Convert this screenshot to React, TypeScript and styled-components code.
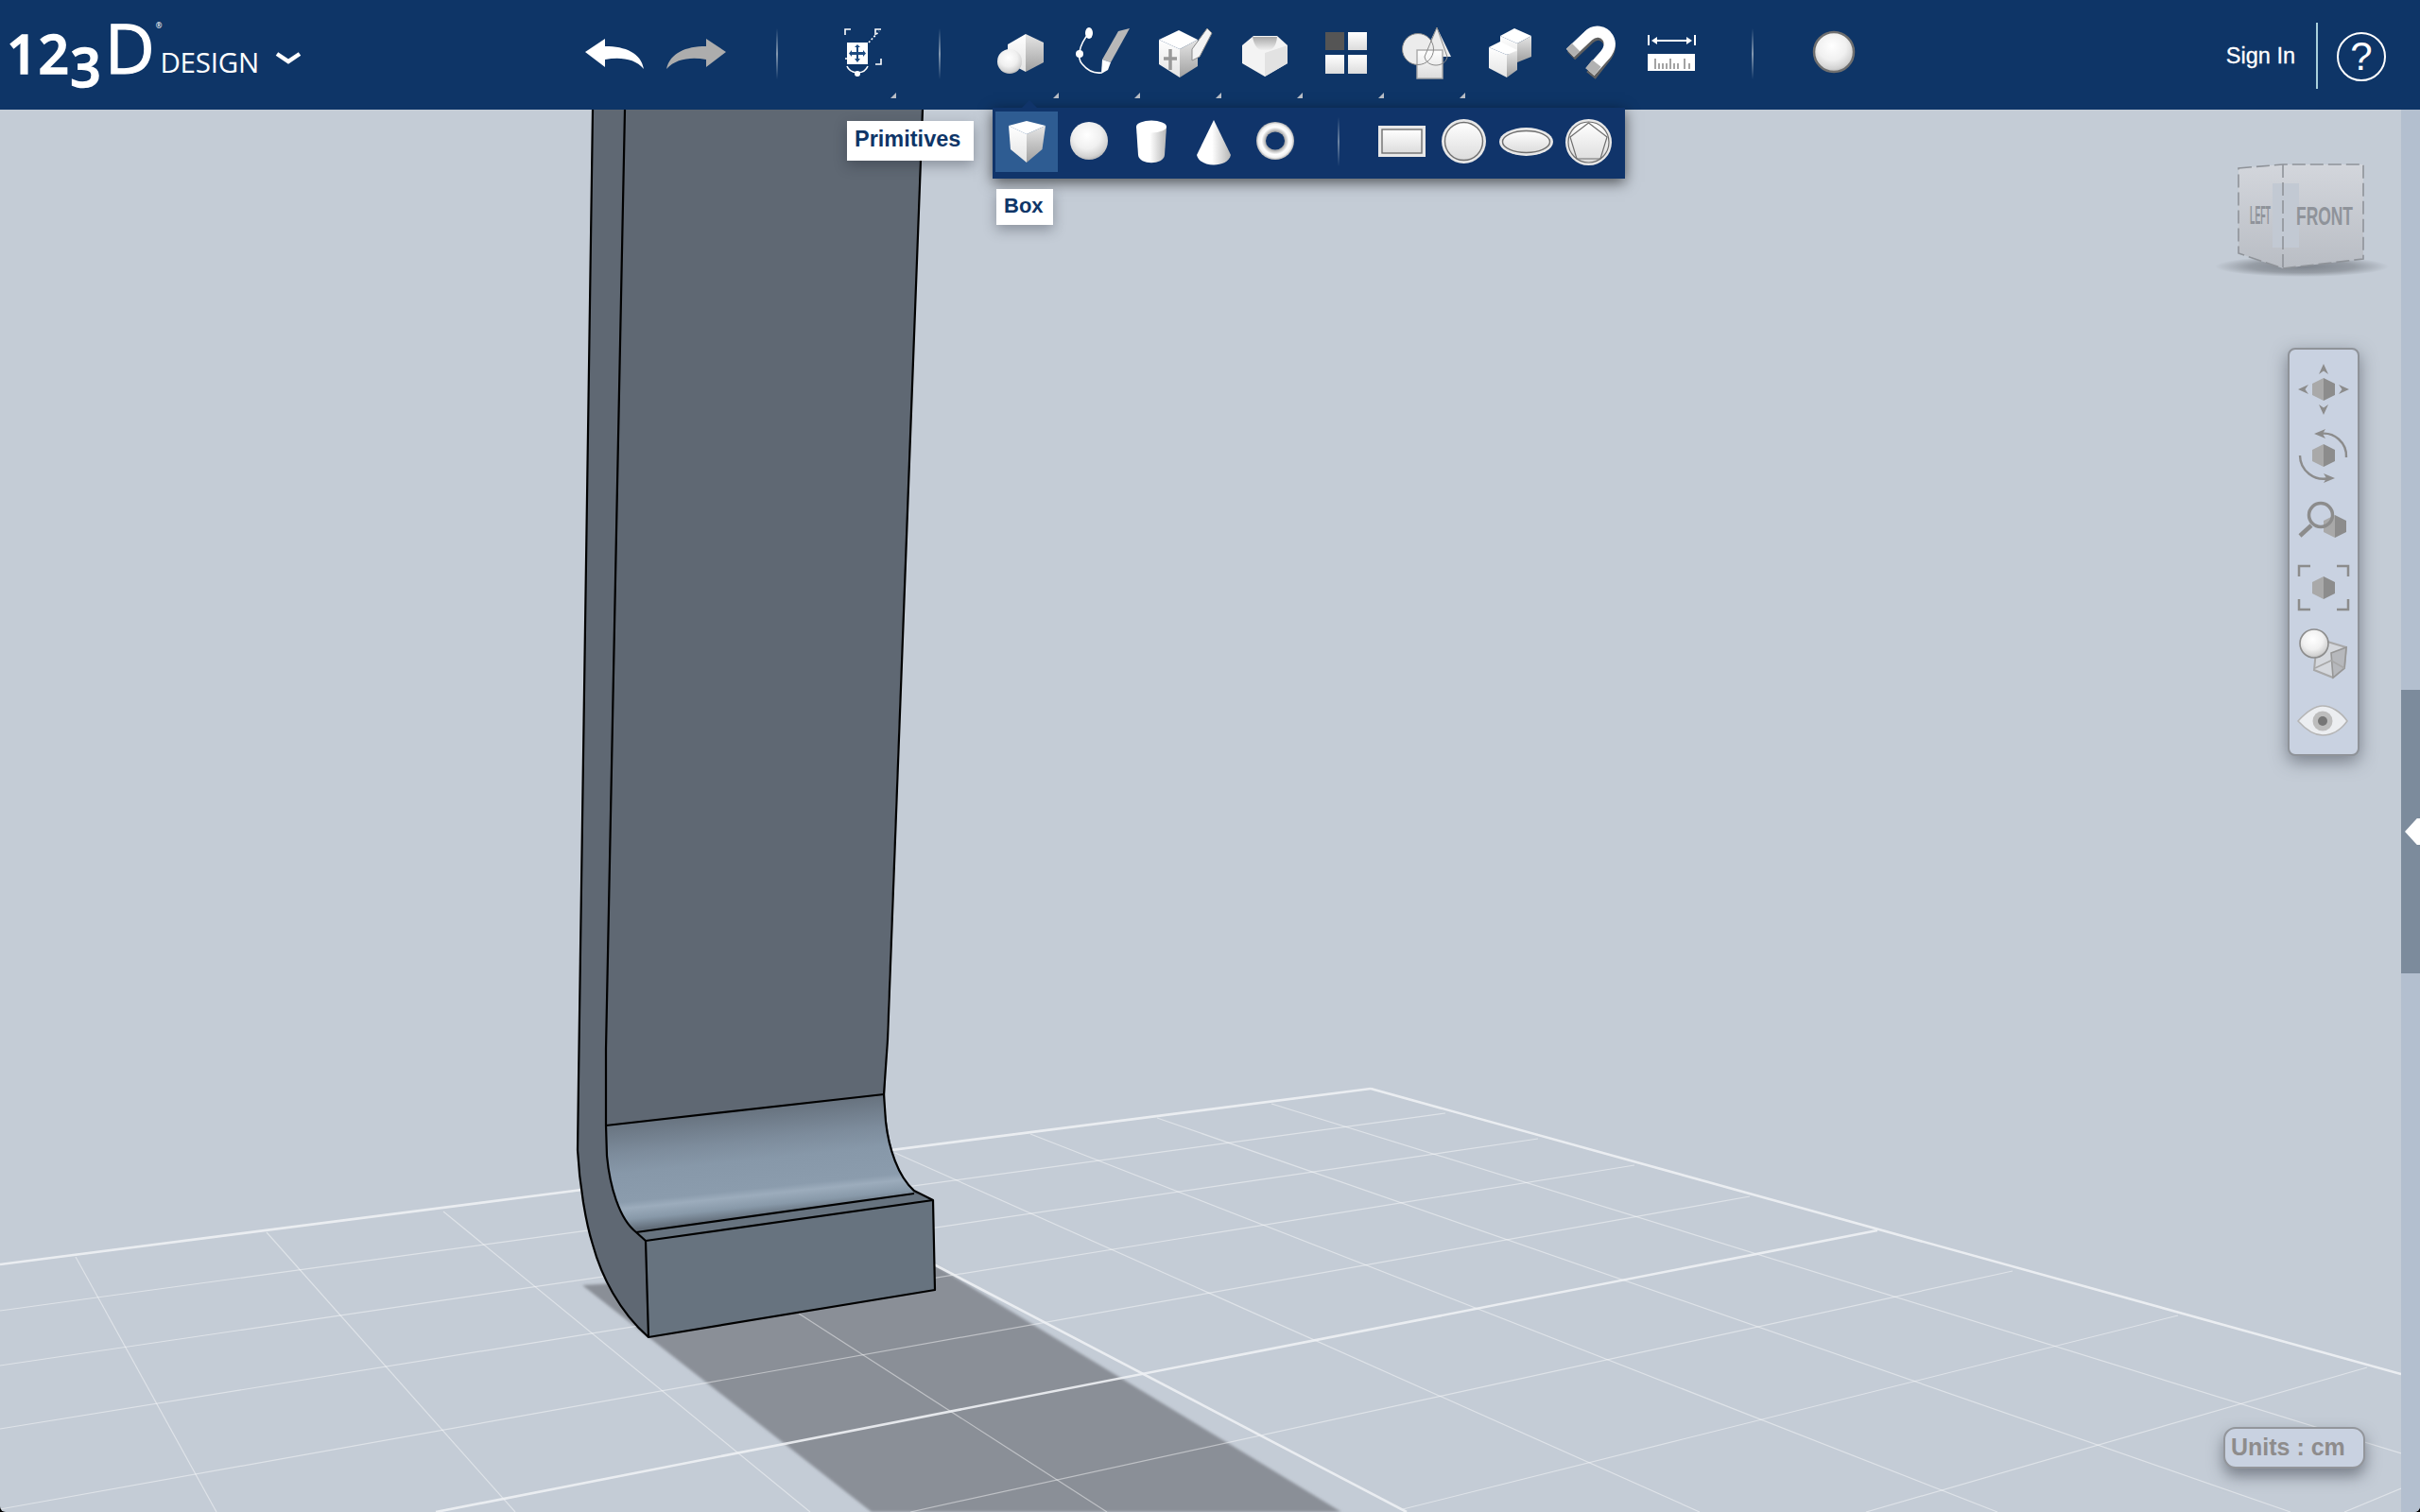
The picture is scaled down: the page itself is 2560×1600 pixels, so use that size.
import React from 'react';
import styled, {createGlobalStyle} from 'styled-components';

const NAVY = '#0e3567';

const GlobalStyle = createGlobalStyle`
  html, body {
    margin: 0;
    padding: 0;
    background: #000;
  }
  body {
    font-family: "Liberation Sans", Arial, sans-serif;
  }
`;

const Page = styled.div`
  position: relative;
  display: flex;
  flex-direction: column;
  width: 2560px;
  height: 1600px;
  overflow: hidden;
  border-radius: 0 0 6px 6px;
  background: #c4ccd6;
`;

const Header = styled.header`
  flex: none;
  display: flex;
  align-items: stretch;
  height: 116px;
  padding-right: 36px;
  box-sizing: border-box;
  background: ${NAVY};
  color: #fff;
`;

const Brand = styled.div`
  flex: none;
  width: 606px;
  display: flex;
  align-items: flex-start;
  padding: 13px 0 0 7px;
  box-sizing: border-box;
`;

const LogoMark = styled.div`
  font-family: "Open Sans", sans-serif;
  font-weight: 600;
  font-size: 57px;
  line-height: 74px;
  letter-spacing: 1px;
  white-space: nowrap;
  display: flex;
  align-items: baseline;
  -webkit-text-stroke: 1.4px #fff;
`;

const LogoThree = styled.span`
  display: inline-block;
  transform: translateY(14px);
`;

const LogoD = styled.span`
  font-size: 73px;
  font-weight: 400;
  -webkit-text-stroke: 1.2px #fff;
  margin-left: 3px;
`;

const LogoReg = styled.sup`
  font-size: 8px;
  letter-spacing: 0;
  line-height: 0;
  -webkit-text-stroke: 0;
  align-self: flex-start;
  margin: 14px 0 0 0;
`;

const LogoWord = styled.span`
  font-family: "Open Sans", sans-serif;
  font-size: 29.5px;
  line-height: 38px;
  margin: 34px 0 0 -2px;
  letter-spacing: -0.2px;
`;

const Chevron = styled.svg`
  width: 28px;
  height: 14px;
  margin: 41px 0 0 17px;
`;

const Cell = styled.div<{$w?: number}>`
  position: relative;
  flex: none;
  width: ${p => p.$w ?? 86}px;
  height: 116px;
  svg {
    display: block;
    width: ${p => p.$w ?? 86}px;
    height: 116px;
  }
`;

const Caret = styled.i`
  position: absolute;
  right: -1px;
  bottom: 12px;
  width: 0;
  height: 0;
  border-left: 6px solid transparent;
  border-bottom: 6px solid #b9bec6;
`;

const Rule = styled.div<{$before: number; $after: number}>`
  flex: none;
  align-self: flex-start;
  width: 2px;
  height: 54px;
  margin: 30px ${p => p.$after}px 0 ${p => p.$before}px;
  background: linear-gradient(to bottom, rgba(170, 185, 200, 0), rgba(170, 185, 200, 0.75) 50%, rgba(170, 185, 200, 0));
`;

const SignIn = styled.a`
  margin-left: auto;
  margin-top: 3px;
  align-self: center;
  font-size: 23.5px;
  color: #fff;
  -webkit-text-stroke: 0.3px #fff;
`;

const HelpDivider = styled.div`
  width: 2px;
  height: 70px;
  align-self: center;
  margin: 2px 20px 0 22px;
  background: #a9d0dc;
`;

const HelpButton = styled.div`
  align-self: center;
  width: 52px;
  height: 52px;
  box-sizing: border-box;
  border: 2px solid #fff;
  border-radius: 50%;
  margin-top: 4px;
  display: flex;
  align-items: center;
  justify-content: center;
  font-size: 42px;
  line-height: 1;
`;

const Main = styled.main`
  flex: 1;
  display: flex;
  min-height: 0;
`;

const Viewport = styled.div`
  position: relative;
  flex: 1;
`;

const Scene = styled.svg`
  position: absolute;
  inset: 0;
  width: 100%;
  height: 100%;
`;

const SidePanel = styled.div`
  flex: none;
  width: 20px;
  position: relative;
  background: #b3bfcf;
`;

const SideHandle = styled.div`
  position: absolute;
  left: 0;
  right: 0;
  top: 614px;
  height: 300px;
  background: #7c8b9c;
  &::after {
    content: '';
    position: absolute;
    left: 4px;
    top: 136px;
    width: 16px;
    height: 28px;
    background: #fff;
    clip-path: polygon(0 50%, 80% 0, 100% 0, 100% 100%, 80% 100%);
  }
`;

const ViewCube = styled.svg`
  position: absolute;
  right: 0;
  top: 50px;
  width: 200px;
  height: 140px;
`;

const NavPanel = styled.div`
  position: absolute;
  right: 44px;
  top: 252px;
  width: 76px;
  height: 432px;
  box-sizing: border-box;
  padding-top: 7px;
  display: flex;
  flex-direction: column;
  align-items: center;
  background: #c9d2e1;
  border: 2px solid #8f9399;
  border-radius: 8px;
  box-shadow: 0 6px 18px rgba(60, 66, 76, 0.55);
`;

const NavIcon = styled.svg`
  display: block;
  flex: none;
  width: 72px;
  height: 70px;
`;

const UnitsBadge = styled.div`
  position: absolute;
  right: 38px;
  bottom: 46px;
  width: 150px;
  height: 44px;
  box-sizing: border-box;
  border: 2px solid #93969b;
  border-radius: 13px;
  background: #c9d2e1;
  box-shadow: 0 8px 16px rgba(60, 66, 76, 0.55);
  padding-left: 6px;
  font-size: 25px;
  font-weight: 700;
  line-height: 38px;
  color: #8e8c8c;
  white-space: nowrap;
`;

const Flyout = styled.div`
  position: absolute;
  left: 1050px;
  top: 114px;
  width: 669px;
  height: 75px;
  box-sizing: border-box;
  padding: 4px 0 0 3px;
  display: flex;
  background: #10346a;
  box-shadow: 0 4px 14px rgba(0, 0, 0, 0.6);
  &::before {
    content: '';
    position: absolute;
    left: 31px;
    top: -8px;
    border-left: 8px solid transparent;
    border-right: 8px solid transparent;
    border-bottom: 8px solid #10346a;
  }
`;

const FlyoutItem = styled.div<{$active?: boolean}>`
  flex: none;
  width: 66px;
  height: 64px;
  background: ${p => (p.$active ? '#2e5c92' : 'transparent')};
  svg {
    display: block;
    width: 66px;
    height: 64px;
  }
`;

const FlyoutRule = styled.div`
  flex: none;
  width: 2px;
  height: 52px;
  margin: 6px 33px 0 32px;
  background: linear-gradient(to bottom, rgba(170, 185, 200, 0), rgba(170, 185, 200, 0.6) 50%, rgba(170, 185, 200, 0));
`;

const Tip = styled.div<{$left: number; $top: number; $w: number; $h: number; $size: number}>`
  position: absolute;
  left: ${p => p.$left}px;
  top: ${p => p.$top}px;
  width: ${p => p.$w}px;
  height: ${p => p.$h}px;
  box-sizing: border-box;
  padding: 0 0 3px 8px;
  display: flex;
  align-items: center;
  background: #fff;
  color: ${NAVY};
  font-size: ${p => p.$size}px;
  font-weight: 700;
  box-shadow: 0 5px 14px rgba(30, 35, 45, 0.35);
`;

const Defs = styled.svg`
  position: absolute;
  width: 0;
  height: 0;
`;

// floor lines, in page coordinates
const thinLines = [
  [0, 1387, 1529, 1178],
  [0, 1445, 1627, 1205],
  [0, 1512, 1729, 1233],
  [0, 1597, 1851, 1266],
  [963, 1600, 2129, 1345],
  [1484, 1597, 2304, 1392],
  [1974, 1600, 2504, 1447],
  [2480, 1600, 2540, 1575],
  [80, 1330, 229, 1600],
  [282, 1304, 545, 1600],
  [469, 1282, 857, 1600],
  [845, 1390, 1171, 1600],
  [947, 1220, 1798, 1600],
  [1090, 1200, 2113, 1600],
  [1224, 1183, 2423, 1600],
  [1345, 1168, 2540, 1538],
];

const thickLines = [
  [0, 1338, 1450, 1152],
  [1450, 1152, 2540, 1454],
  [461, 1600, 1986, 1302],
  [988, 1338, 1488, 1600],
];

const Floor = () => (
  <g>
    <polygon points="616,1360 988,1338 1419,1600 922,1600" fill="#8a8f97" filter="url(#soft)" />
    {thinLines.map(([x1, y1, x2, y2], i) => (
      <line key={i} x1={x1} y1={y1} x2={x2} y2={y2} stroke="#fff" strokeOpacity="0.45" strokeWidth="1.2" />
    ))}
    {thickLines.map(([x1, y1, x2, y2], i) => (
      <line key={i} x1={x1} y1={y1} x2={x2} y2={y2} stroke="#eef1f4" strokeOpacity="0.9" strokeWidth="2.6" />
    ))}
  </g>
);

const Bracket = () => (
  <g fill="none" stroke="#000" strokeWidth="2.2" strokeLinejoin="round">
    <path
      d="M627 116 L612 1143 L611 1217 C613 1255 620 1295 630 1325 C640 1358 655 1388 685 1415 L989 1365 L987 1270 C975 1266 968 1262 962 1255 C948 1240 940 1210 936 1170 L937 1127 L976 116 Z"
      fill="#5f6873"
      stroke="none"
    />
    <path d="M641 1191 L935 1159 C937 1200 945 1232 967 1263 L673 1304 C655 1290 645 1250 642 1223 Z" fill="url(#fillet)" stroke="none" />
    <path d="M683 1313 L987 1270 L989 1365 L686 1415 Z" fill="#67737f" stroke="none" />
    <path d="M673 1304 L967 1263 L987 1270 L683 1313 Z" fill="#67737f" stroke="none" />
    <path d="M627 116 L612 1143 L611 1217 C613 1255 620 1295 627 1317 C636 1350 655 1388 686 1415" />
    <path d="M661 116 L641 1110 L641 1191 L642 1223 C645 1255 655 1290 673 1304 L683 1313" />
    <path d="M976 116 L939 1100 L935 1158 L937 1187 C940 1215 950 1245 967 1260 L987 1270" />
    <path d="M641 1191 L935 1158" />
    <path d="M673 1304 L967 1263" />
    <path d="M683 1313 L987 1270 L989 1365 L686 1415 Z" />
  </g>
);

const Hex = ({x = 36, y = 35}: {x?: number; y?: number}) => (
  <g>
    <polygon points={`${x},${y - 12} ${x},${y + 12} ${x - 12},${y + 6} ${x - 12},${y - 6}`} fill="#a9a9a9" />
    <polygon points={`${x},${y - 12} ${x + 12},${y - 6} ${x + 12},${y + 6} ${x},${y + 12}`} fill="#8c8c8c" />
  </g>
);

const NavPan = () => (
  <NavIcon viewBox="0 0 72 70">
    <Hex />
    {[0, 90, 180, 270].map(a => (
      <path key={a} d="M36 8 L41 19 L36 15.5 L31 19 Z" fill="#8c8c8c" transform={`rotate(${a} 36 35)`} />
    ))}
  </NavIcon>
);

const NavOrbit = () => (
  <NavIcon viewBox="0 0 72 70">
    <Hex />
    <g fill="none" stroke="#8c8c8c" strokeWidth="2.4">
      <path d="M32 12 A 24 24 0 0 1 60 37" />
      <path d="M11 35 A 25 25 0 0 0 42 59" />
    </g>
    <path d="M26 12 L38 7 L35 12 L38 17 Z" fill="#8c8c8c" />
    <path d="M48 59 L36 54 L39 59 L36 64 Z" fill="#8c8c8c" />
  </NavIcon>
);

const NavZoom = () => (
  <NavIcon viewBox="0 0 72 70">
    <Hex x={48} y={40} />
    <circle cx="33" cy="28" r="12.5" fill="none" stroke="#8c8c8c" strokeWidth="3.5" />
    <path d="M23 39 L11 50" stroke="#8c8c8c" strokeWidth="4.5" />
  </NavIcon>
);

const NavFit = () => (
  <NavIcon viewBox="0 0 72 70">
    <Hex />
    <path
      d="M22 12 H10 V23 M50 12 H62 V23 M10 47 V58 H22 M62 47 V58 H50"
      fill="none"
      stroke="#8c8c8c"
      strokeWidth="2.5"
    />
  </NavIcon>
);

const NavDisplay = () => (
  <NavIcon viewBox="0 0 72 70">
    <polygon points="40,22 60,28 58,50 46,60 26,52 28,32" fill="#d5d8dd" stroke="#a8a8a8" strokeWidth="2" />
    <polygon points="44,34 60,28 58,50 46,60" fill="#b6b8bc" stroke="#979797" strokeWidth="1.6" />
    <path d="M27 50 L44 42 L58 50" fill="none" stroke="#a8a8a8" strokeWidth="1.6" />
    <circle cx="26" cy="24" r="15" fill="url(#ball)" stroke="#8c8c8c" strokeWidth="1.6" />
  </NavIcon>
);

const NavEye = () => (
  <NavIcon viewBox="0 0 72 70">
    <path d="M9 36 C20 24 28 20 35 20 C44 20 54 26 61 36 C54 46 44 51 35 51 C27 51 18 46 9 36 Z" fill="#eceef1" stroke="#b5b5b5" strokeWidth="1.5" />
    <circle cx="35" cy="36" r="10.5" fill="#bdbdbd" />
    <circle cx="35" cy="36" r="5" fill="#767676" />
  </NavIcon>
);

const IconTransform = () => (
  <svg viewBox="0 0 77 116">
    <g fill="none" stroke="#fff" strokeWidth="1.6">
      <path d="M24 37 V31 H30 M56 37 V31 H62 M26 62 H24 M62 62 V68 H56" />
      <path d="M49 45 L60 33" strokeDasharray="2 2" />
      <path d="M26 70 C29 78 44 80 48 70" />
    </g>
    <rect x="26" y="45" width="22" height="23" fill="#fff" />
    <path
      d="M37 47 L40 50 H38 V55 H43 V53 L46 56.5 L43 60 V58 H38 V62 H40 L37 66 L34 62 H36 V58 H31 V60 L28 56.5 L31 53 V55 H36 V50 H34 Z"
      fill="#1c4a80"
    />
    <circle cx="37" cy="78" r="3" fill="#fff" />
  </svg>
);

const IconPrimitives = () => (
  <svg viewBox="0 0 86 116">
    <polygon points="33,47 52,36 52,76 33,66" fill="url(#paper)" />
    <polygon points="52,36 71,45 71,66 52,76" fill="url(#shade)" />
    <ellipse cx="35" cy="65" rx="13" ry="13" fill="url(#ball)" />
  </svg>
);

const IconSketch = () => (
  <svg viewBox="0 0 86 116">
    <path d="M33 35 C22 48 20 62 26 68 C31 74 38 78 46 77" fill="none" stroke="#fff" strokeWidth="1.6" />
    <ellipse cx="33" cy="35" rx="4" ry="6" fill="#fff" />
    <circle cx="23" cy="57" r="4" fill="#fff" />
    <polygon points="64,33 76,30 56,66 47,63" fill="#b8b8b8" />
    <polygon points="47,63 56,66 53,74 46,78" fill="#fff" />
  </svg>
);

const IconConstruct = () => (
  <svg viewBox="0 0 86 116">
    <polygon points="21,42 42,32 62,42 43,52" fill="#fff" />
    <polygon points="21,42 43,52 43,82 21,68" fill="url(#paper)" />
    <polygon points="43,52 62,42 62,70 43,82" fill="url(#shade)" />
    <path d="M33 52 V74 M26 62 H40" stroke="#999" strokeWidth="3.5" />
    <polygon points="72,30 77,35 64,60 56,64 56,52" fill="#f4f4f4" stroke="#8b8b8b" strokeWidth="1" />
  </svg>
);

const IconModify = () => (
  <svg viewBox="0 0 86 116">
    <polygon points="35,38 60,38 71,48 71,67 47,81 23,67 23,48" fill="#f3f3f3" />
    <polygon points="47,56 71,48 71,67 47,81" fill="#e2e2e2" />
    <path d="M34 39 C36 50 40 53 47 54 C55 53 59 50 60 39 Z" fill="url(#gouge)" />
  </svg>
);

const IconPattern = () => (
  <svg viewBox="0 0 86 116">
    <rect x="25" y="34" width="20" height="19" fill="#555" />
    <rect x="49" y="34" width="20" height="19" fill="url(#soft-white)" />
    <rect x="25" y="58" width="20" height="20" fill="url(#soft-white)" />
    <rect x="49" y="58" width="20" height="20" fill="url(#soft-white)" />
  </svg>
);

const IconGroup = () => (
  <svg viewBox="0 0 86 116">
    <circle cx="37" cy="52" r="16.5" fill="#ececec" />
    <polygon points="57,29 72,60 42,60" fill="#ececec" />
    <rect x="36" y="53" width="27" height="30" fill="url(#soft-white)" stroke="#a9a9a9" strokeWidth="1.4" />
    <g fill="none" stroke="#8a8a8a" strokeWidth="1">
      <circle cx="37" cy="52" r="16.5" />
      <path d="M57 29 L68 60 C66 72 46 72 44 60 Z" />
    </g>
  </svg>
);

const IconCombine = () => (
  <svg viewBox="0 0 86 116">
    <polygon points="38,38 53,30 71,38 56,46" fill="#fff" />
    <polygon points="38,38 56,46 56,66 38,50" fill="url(#paper)" />
    <polygon points="56,46 71,38 71,60 56,66" fill="url(#shade)" />
    <polygon points="26,50 38,44 56,53 45,58" fill="#fff" />
    <polygon points="26,50 45,58 45,82 26,72" fill="url(#paper)" />
    <polygon points="45,58 56,54 56,74 45,82" fill="url(#shade)" />
  </svg>
);

const IconSnap = () => (
  <svg viewBox="0 0 86 116">
    <path
      d="M27 59 L46 41 C53 34 62 36 66 43 C70 50 67 56 63 61 L48 80"
      fill="none"
      stroke="#5f5f5f"
      strokeWidth="12"
    />
    <path d="M26 56 L45 38 C52 31 62 33 66 40 C70 47 67 53 63 58 L47 76" fill="none" stroke="#fff" strokeWidth="12" />
    <path d="M26 56 L32 50 M47 76 L54 67" fill="none" stroke="#b2b2b2" strokeWidth="12" />
  </svg>
);

const IconRuler = () => (
  <svg viewBox="0 0 86 116">
    <path d="M23 37 V48 M72 37 V48" stroke="#fff" strokeWidth="2" />
    <path d="M30 43 H64" stroke="#fff" strokeWidth="2" />
    <path d="M26 43 L32 39 V47 Z M69 43 L63 39 V47 Z" fill="#fff" />
    <rect x="22" y="57" width="50" height="18" fill="#fff" />
    <path d="M30 73 V62 M34 73 V67 M38 73 V67 M42 73 V67 M46 73 V62 M50 73 V67 M54 73 V67 M61 73 V62 M66 73 V67" stroke="#a3a3a3" strokeWidth="2" />
  </svg>
);

const IconMaterial = () => (
  <svg viewBox="0 0 86 116">
    <circle cx="43" cy="55" r="21" fill="url(#ball)" stroke="#6f6f6f" strokeWidth="2.5" />
  </svg>
);

const ShapeBox = () => (
  <svg viewBox="0 0 66 64">
    <polygon points="33,10 53,15 33,24 14,15" fill="#fff" />
    <polygon points="14,15 33,24 33,54 16,40" fill="url(#paper)" />
    <polygon points="33,24 53,15 49.5,40 33,54" fill="url(#shade)" />
  </svg>
);

const ShapeSphere = () => (
  <svg viewBox="0 0 66 64">
    <circle cx="33" cy="31" r="20" fill="url(#ball)" />
  </svg>
);

const ShapeCylinder = () => (
  <svg viewBox="0 0 66 64">
    <path d="M17 16 L19 46 C20 57 46 57 47 46 L49 16 Z" fill="url(#side)" />
    <ellipse cx="33" cy="16" rx="16" ry="6.5" fill="#fff" />
  </svg>
);

const ShapeCone = () => (
  <svg viewBox="0 0 66 64">
    <path d="M33 9 L15 46 C18 60 48 60 51 46 Z" fill="url(#side)" />
  </svg>
);

const ShapeTorus = () => (
  <svg viewBox="0 0 66 64">
    <circle cx="32" cy="31" r="20" fill="url(#ring)" />
    <ellipse cx="32" cy="31" rx="10" ry="9.5" fill="#10346a" />
  </svg>
);

const ShapeRect = () => (
  <svg viewBox="0 0 66 64">
    <rect x="8" y="15" width="50" height="33" fill="#e8e8e8" />
    <rect x="12" y="19" width="42" height="25" fill="url(#soft-white)" stroke="#6f6f6f" strokeWidth="1.4" />
  </svg>
);

const ShapeCircle = () => (
  <svg viewBox="0 0 66 64">
    <circle cx="32.5" cy="31.5" r="23.5" fill="#e8e8e8" />
    <circle cx="32.5" cy="31.5" r="20" fill="url(#soft-white)" stroke="#6f6f6f" strokeWidth="1.4" />
  </svg>
);

const ShapeEllipse = () => (
  <svg viewBox="0 0 66 64">
    <ellipse cx="32.5" cy="32" rx="28.5" ry="15" fill="#e8e8e8" />
    <ellipse cx="32.5" cy="32" rx="25" ry="11.5" fill="url(#soft-white)" stroke="#6f6f6f" strokeWidth="1.4" />
  </svg>
);

const ShapePolygon = () => (
  <svg viewBox="0 0 66 64">
    <circle cx="32.5" cy="32.5" r="24.5" fill="#e8e8e8" />
    <circle cx="32.5" cy="32.5" r="21.5" fill="url(#soft-white)" stroke="#6f6f6f" strokeWidth="1.2" />
    <polygon points="32.5,12 52,27 45,50 20,50 13,27" fill="none" stroke="#6f6f6f" strokeWidth="1.2" />
  </svg>
);

const tools = [
  {name: 'primitives', icon: <IconPrimitives />, caret: true},
  {name: 'sketch', icon: <IconSketch />, caret: true},
  {name: 'construct', icon: <IconConstruct />, caret: true},
  {name: 'modify', icon: <IconModify />, caret: true},
  {name: 'pattern', icon: <IconPattern />, caret: true},
  {name: 'group', icon: <IconGroup />, caret: true},
  {name: 'combine', icon: <IconCombine />, caret: false},
  {name: 'snap', icon: <IconSnap />, caret: false},
  {name: 'ruler', icon: <IconRuler />, caret: false},
];

const App = () => (
  <Page>
    <GlobalStyle />
    <Defs>
      <defs>
        <linearGradient id="paper" x1="0" y1="0" x2="0" y2="1">
          <stop offset="0" stopColor="#fff" />
          <stop offset="1" stopColor="#e4e4e4" />
        </linearGradient>
        <linearGradient id="shade" x1="0" y1="0" x2="0" y2="1">
          <stop offset="0" stopColor="#e6e6e6" />
          <stop offset="1" stopColor="#a0a0a0" />
        </linearGradient>
        <linearGradient id="soft-white" x1="0" y1="0" x2="0" y2="1">
          <stop offset="0" stopColor="#fff" />
          <stop offset="1" stopColor="#dcdcdc" />
        </linearGradient>
        <linearGradient id="gouge" x1="0" y1="0" x2="0" y2="1">
          <stop offset="0" stopColor="#a8a8a8" />
          <stop offset="1" stopColor="#f5f5f5" />
        </linearGradient>
        <linearGradient id="side" x1="0" y1="0" x2="1" y2="0">
          <stop offset="0" stopColor="#fff" />
          <stop offset="0.45" stopColor="#fff" />
          <stop offset="1" stopColor="#b5b5b5" />
        </linearGradient>
        <radialGradient id="ball" cx="0.45" cy="0.35" r="0.72">
          <stop offset="0" stopColor="#fff" />
          <stop offset="0.5" stopColor="#f0f0f0" />
          <stop offset="0.8" stopColor="#d2d2d2" />
          <stop offset="1" stopColor="#a0a0a0" />
        </radialGradient>
        <radialGradient id="ring" cx="0.5" cy="0.5" r="0.5">
          <stop offset="0.5" stopColor="#a8a8a8" />
          <stop offset="0.72" stopColor="#fff" />
          <stop offset="0.88" stopColor="#f2f2f2" />
          <stop offset="1" stopColor="#b0b0b0" />
        </radialGradient>
        <linearGradient id="fillet" gradientUnits="userSpaceOnUse" x1="788" y1="1172" x2="800" y2="1288">
          <stop offset="0" stopColor="#66717d" />
          <stop offset="0.3" stopColor="#7d8c9c" />
          <stop offset="0.48" stopColor="#8798a9" />
          <stop offset="0.74" stopColor="#8b9cad" />
          <stop offset="0.8" stopColor="#9cacbc" />
          <stop offset="0.9" stopColor="#8899a9" />
          <stop offset="1" stopColor="#626d79" />
        </linearGradient>
        <linearGradient id="cubeFace" x1="0" y1="0" x2="0" y2="1">
          <stop offset="0" stopColor="#d3d6dc" />
          <stop offset="1" stopColor="#b9bdc4" />
        </linearGradient>
        <radialGradient id="cubeShadow" cx="0.5" cy="0.5" r="0.5">
          <stop offset="0" stopColor="#7d838c" />
          <stop offset="0.6" stopColor="#8b9199" stopOpacity="0.8" />
          <stop offset="1" stopColor="#8b9199" stopOpacity="0" />
        </radialGradient>
        <filter id="soft" x="-5%" y="-5%" width="110%" height="110%">
          <feGaussianBlur stdDeviation="1.5" />
        </filter>
      </defs>
    </Defs>

    <Header>
      <Brand>
        <LogoMark>
          <span>12</span>
          <LogoThree>3</LogoThree>
          <LogoD>D</LogoD>
          <LogoReg>®</LogoReg>
        </LogoMark>
        <LogoWord>DESIGN</LogoWord>
        <Chevron viewBox="0 0 28 14">
          <path d="M2 3 L14 11 L26 3" fill="none" stroke="#fff" strokeWidth="4.5" />
        </Chevron>
      </Brand>
      <Cell>
        <svg viewBox="0 0 86 116">
          <path d="M13 55 L34 41 V49 C56 49 72 56 75 73 C66 62 50 60 34 63 V71 Z" fill="#fff" />
        </svg>
      </Cell>
      <Cell>
        <svg viewBox="0 0 86 116">
          <path d="M76 55 L55 41 V49 C33 49 17 56 13 73 C23 62 39 60 55 63 V71 Z" fill="#adadad" />
        </svg>
      </Cell>
      <Rule $before={43} $after={47} />
      <Cell $w={77}>
        <IconTransform />
        <Caret />
      </Cell>
      <Rule $before={46} $after={38} />
      {tools.map(tool => (
        <Cell key={tool.name}>
          {tool.icon}
          {tool.caret && <Caret />}
        </Cell>
      ))}
      <Rule $before={46} $after={42} />
      <Cell>
        <IconMaterial />
      </Cell>
      <SignIn>Sign In</SignIn>
      <HelpDivider />
      <HelpButton>?</HelpButton>
    </Header>

    <Main>
      <Viewport>
        <Scene viewBox="0 116 2540 1484" preserveAspectRatio="none">
          <Floor />
          <Bracket />
        </Scene>
        <ViewCube viewBox="2340 166 200 140">
          <ellipse cx="2435" cy="282" rx="92" ry="11" fill="url(#cubeShadow)" />
          <polygon points="2368,178 2415,174 2415,284 2368,268" fill="url(#cubeFace)" />
          <polygon points="2415,174 2500,174 2500,274 2415,284" fill="url(#cubeFace)" />
          <rect x="2404" y="194" width="28" height="68" fill="#c2c9d3" />
          <g fill="none" stroke="#8f9399" strokeWidth="1.6" strokeDasharray="14 5">
            <polygon points="2368,178 2415,174 2500,174 2500,274 2415,284 2368,268" />
            <line x1="2415" y1="174" x2="2415" y2="284" />
          </g>
          <text x="2380" y="237" fontFamily="Liberation Sans" fontWeight="700" fontSize="27" fill="#8f939a" textLength="22" lengthAdjust="spacingAndGlyphs">LEFT</text>
          <text x="2429" y="238" fontFamily="Liberation Sans" fontWeight="700" fontSize="28" fill="#8f939a" textLength="60" lengthAdjust="spacingAndGlyphs">FRONT</text>
        </ViewCube>
        <NavPanel>
          <NavPan />
          <NavOrbit />
          <NavZoom />
          <NavFit />
          <NavDisplay />
          <NavEye />
        </NavPanel>
        <UnitsBadge>Units : cm</UnitsBadge>
      </Viewport>
      <SidePanel>
        <SideHandle />
      </SidePanel>
    </Main>

    <Flyout>
      <FlyoutItem $active><ShapeBox /></FlyoutItem>
      <FlyoutItem><ShapeSphere /></FlyoutItem>
      <FlyoutItem><ShapeCylinder /></FlyoutItem>
      <FlyoutItem><ShapeCone /></FlyoutItem>
      <FlyoutItem><ShapeTorus /></FlyoutItem>
      <FlyoutRule />
      <FlyoutItem><ShapeRect /></FlyoutItem>
      <FlyoutItem><ShapeCircle /></FlyoutItem>
      <FlyoutItem><ShapeEllipse /></FlyoutItem>
      <FlyoutItem><ShapePolygon /></FlyoutItem>
    </Flyout>
    <Tip $left={896} $top={128} $w={134} $h={42} $size={23.5}>Primitives</Tip>
    <Tip $left={1054} $top={200} $w={60} $h={38} $size={22}>Box</Tip>
  </Page>
);

export default App;
